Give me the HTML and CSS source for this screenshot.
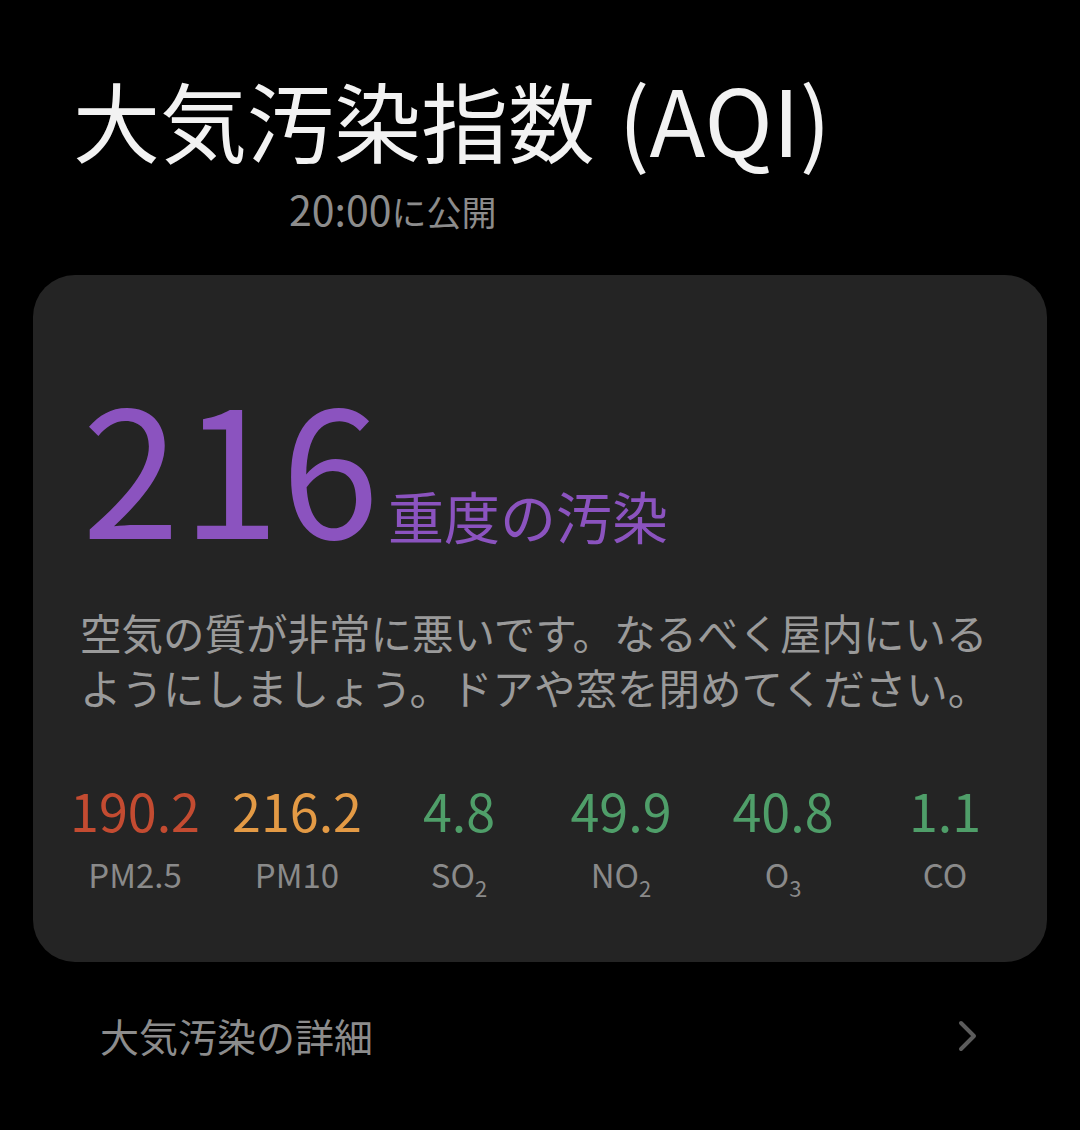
FILE: index.html
```html
<!DOCTYPE html>
<html lang="ja">
<head>
<meta charset="utf-8">
<link rel="stylesheet" href="styles.css">
</head>
<body>
<div class="page">
  <header class="header">
    <h1 class="title">大気汚染指数 <span class="latin">(AQI)</span></h1>
    <div class="published"><span class="time">20:00</span>に公開</div>
  </header>
  <section class="card">
    <div class="aqi">
      <span class="aqi-value">216</span>
      <span class="aqi-level">重度の汚染</span>
    </div>
    <p class="advice">空気の質が非常に悪いです。なるべく屋内にいるようにしましょう。ドアや窓を閉めてください。</p>
    <div class="pollutants">
      <div class="pollutant"><div class="val red">190.2</div><div class="name">PM2.5</div></div>
      <div class="pollutant"><div class="val orange">216.2</div><div class="name">PM10</div></div>
      <div class="pollutant"><div class="val green">4.8</div><div class="name">SO<sub>2</sub></div></div>
      <div class="pollutant"><div class="val green">49.9</div><div class="name">NO<sub>2</sub></div></div>
      <div class="pollutant"><div class="val green">40.8</div><div class="name">O<sub>3</sub></div></div>
      <div class="pollutant"><div class="val green">1.1</div><div class="name">CO</div></div>
    </div>
  </section>
  <div class="details">
    <span class="details-label">大気汚染の詳細</span>
    <svg class="chevron" width="20" height="32" viewBox="0 0 20 32"><path d="M3 3 L16 16 L3 29" fill="none" stroke="#5c5c5c" stroke-width="4" stroke-linecap="round" stroke-linejoin="round"/></svg>
  </div>
</div>
</body>
</html>
```
FILE: styles.css
```css
html, body {
  margin: 0;
  padding: 0;
  background: #000;
}
body {
  font-family: "Noto Sans CJK JP", "Noto Sans", sans-serif;
  width: 1080px;
  height: 1130px;
  overflow: hidden;
}
.page {
  display: flex;
  flex-direction: column;
}
.header {
  padding: 71px 0 0 73px;
  height: 275px;
  box-sizing: border-box;
}
.title {
  margin: 0;
  font-size: 87px;
  font-weight: 400;
  line-height: 1;
  color: #f2f2f2;
  white-space: nowrap;
}
.title .latin {
  font-size: 92px;
  margin-left: 4px;
}
.published {
  margin: 25px 0 0 216px;
  font-size: 35px;
  line-height: 1;
  color: #8c8c8c;
}
.published .time {
  font-size: 41px;
}
.card {
  margin: 0 33px;
  height: 687px;
  box-sizing: border-box;
  background: #242424;
  border-radius: 42px;
  padding: 100px 21px 0 21px;
}
.aqi {
  display: flex;
  align-items: baseline;
  padding-left: 28px;
}
.aqi-value {
  font-size: 176px;
  line-height: 1;
  color: #8b53bf;
  letter-spacing: 2px;
}
.aqi-level {
  margin-left: 7px;
  font-size: 56px;
  line-height: 1;
  color: #8b53bf;
}
.advice {
  margin: 54px 22px 0 26px;
  font-size: 41.5px;
  line-height: 55px;
  color: #9a9a9a;
}
.pollutants {
  display: grid;
  grid-template-columns: repeat(6, 1fr);
  margin-top: 69px;
}
.pollutant {
  display: flex;
  flex-direction: column;
  align-items: center;
}
.val {
  font-size: 52px;
  line-height: 1;
}
.red { color: #c34b31; }
.orange { color: #e39a45; }
.green { color: #4f9e69; }
.name {
  margin-top: 22px;
  font-size: 33px;
  line-height: 1;
  color: #8a8a8a;
}
.name sub {
  font-size: 22px;
  vertical-align: -9px;
  line-height: 0;
}
.details {
  display: flex;
  align-items: center;
  justify-content: space-between;
  padding: 54px 102px 0 100px;
}
.details-label {
  font-size: 39px;
  line-height: 1;
  color: #8c8c8c;
}
.chevron {
  display: block;
}
```
